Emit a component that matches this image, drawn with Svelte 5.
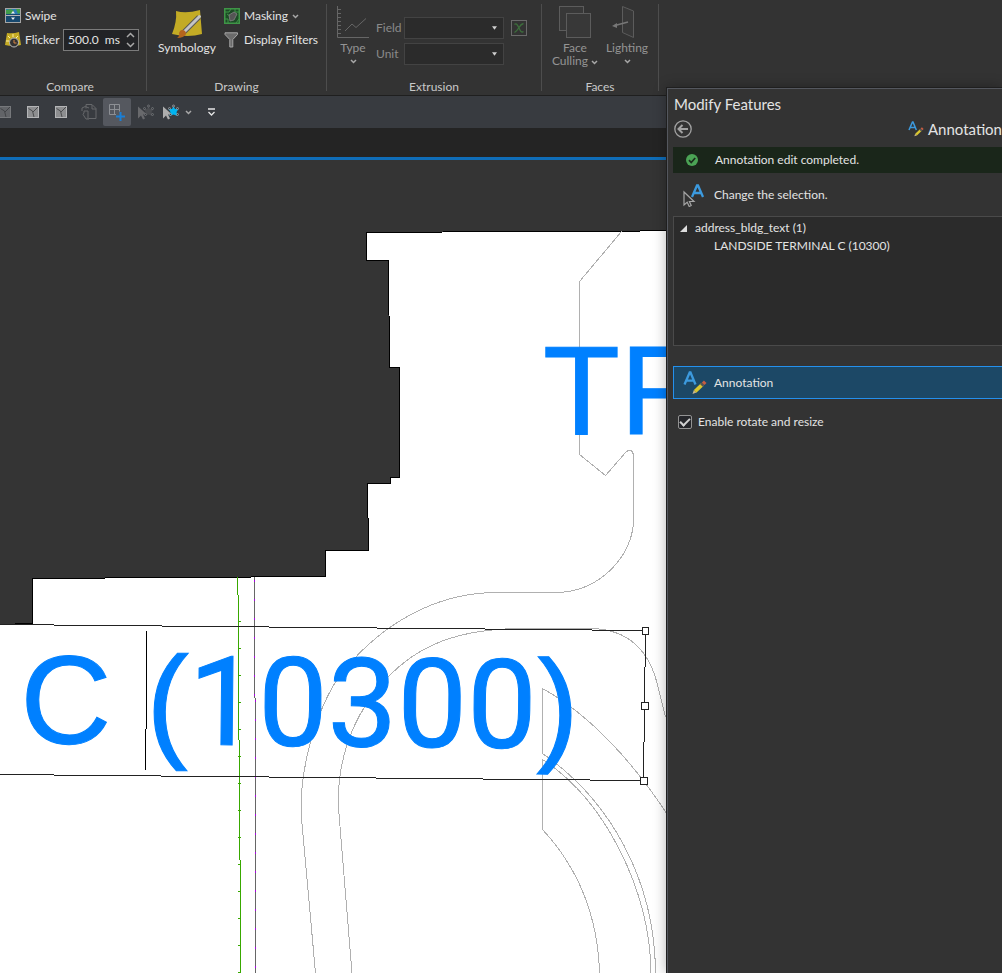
<script>
  let flicker = $state('500.0  ms');
  let field = $state('');
  let unit = $state('');
  let rotateResize = $state(true);
  let expanded = $state(true);

  function step(amount) {
    const value = Math.max(0, parseFloat(flicker) + amount);
    flicker = value.toFixed(1) + '  ms';
  }
</script>

{#snippet chevron()}
  <svg class="chevron" viewBox="0 0 7 5" width="7" height="5"><path d="M1 1l2.5 2.5L6 1" /></svg>
{/snippet}

{#snippet mapTile()}
  <svg viewBox="0 0 12 12" width="12" height="12">
    <rect x=".5" y=".5" width="11" height="11" fill="#8d8e90" stroke="#b4b5b7" />
    <path d="M1.500 2.500l4 2.500 1.500 6M6 6l5-5" fill="none" stroke="#4b4c4e" />
  </svg>
{/snippet}

{#snippet annotationIcon(size)}
  <svg viewBox="0 0 24 24" width={size} height={size}>
    <path d="M1.500 13.500L6.700 1.500h.8l5 12M3.600 9.600h7" fill="none" stroke="#3c9ade" stroke-width="2.300" />
    <path d="M9.500 23l1.300-4 2.600 2.600z" fill="#c9b58a" />
    <path d="M12.100 20.400l7.400-7" stroke="#d9c62f" stroke-width="3.600" />
    <path d="M18.400 14.400l1.800-1.800" stroke="#555" stroke-width="3.600" />
    <path d="M20.200 12.700l2-2" stroke="#c85c41" stroke-width="3.600" />
  </svg>
{/snippet}

{#snippet selectIcon(arrow, star, dots)}
  <svg viewBox="0 0 17 16" width="17" height="16">
    <path d="M1 2.500v12l3-3 2 4 2-1-2-4h4z" fill={arrow} />
    <path d="M11.500 2l1.500 3 3.500 0-2 3 1 4-4-1.500-4 1.500 1-4-2-3h3.500z" fill={star} />
    <g fill="#383b40" stroke={dots} stroke-width=".8">
      <circle cx="11.500" cy="2" r="1" />
      <circle cx="7.500" cy="4.500" r="1" />
      <circle cx="15.500" cy="4.500" r="1" />
      <circle cx="15.500" cy="10.500" r="1" />
      <circle cx="8.500" cy="10.500" r="1" />
    </g>
  </svg>
{/snippet}

<div class="app">
  <header class="ribbon">
    <section class="group compare">
      <div class="body rows">
        <button class="row">
          <svg viewBox="0 0 16 16" width="16" height="16">
            <rect x=".5" y=".5" width="15" height="14" fill="#17486e" stroke="#a5a5a5" />
            <path d="M1 1h14v5H1z" fill="#2b7cb3" />
            <path d="M1 2l5-1 3 2-3 3H1zM11 1h4v4l-2 1z" fill="#3f9c4b" />
            <path d="M1 7.500h14" stroke="#b5b5b5" />
            <path d="M6 5.500L8 3l2 2.500zM6 9.500L8 12l2-2.500z" fill="#eee" />
          </svg>
          <span>Swipe</span>
        </button>
        <div class="row">
          <svg viewBox="0 0 16 16" width="16" height="16">
            <path d="M2 1q6 1 12-1l2 13q-8 2-16 0z" fill="#c5ab24" />
            <path d="M8 2v3M3 4l2 2M13 4l-2 2M1 9h3" stroke="#fff0a0" />
            <circle cx="9" cy="10.500" r="4.500" fill="#333" stroke="#bbb" />
            <path d="M9 8v3h2.500" fill="none" stroke="#d98645" />
          </svg>
          <label for="flicker">Flicker</label>
          <div class="spinner">
            <input id="flicker" type="text" bind:value={flicker} />
            <div class="steps">
              <button aria-label="Increase" onclick={() => step(100)}>
                <svg viewBox="0 0 9 6" width="9" height="6"><path d="M1 5l3.500-3.500L8 5" /></svg>
              </button>
              <button aria-label="Decrease" onclick={() => step(-100)}>
                <svg viewBox="0 0 9 6" width="9" height="6"><path d="M1 1l3.500 3.500L8 1" /></svg>
              </button>
            </div>
          </div>
        </div>
      </div>
      <h2>Compare</h2>
    </section>

    <section class="group drawing">
      <div class="body">
        <button class="big">
          <svg viewBox="0 0 32 32" width="32" height="32">
            <path d="M5 3q10 3 24-1l2 24q-14 4-30 0q5-12 4-23z" fill="#c3ab25" />
            <path d="M28 9L12 25" stroke="#555" stroke-width="5" />
            <path d="M28.500 8.500L13 24" stroke="#c4c4c4" stroke-width="3" stroke-linecap="round" />
            <path d="M11 22q4 0 4 4q-2 4-9 4q3-2 2-5q1-3 3-3z" fill="#b5651d" />
          </svg>
          <span>Symbology</span>
        </button>
        <div class="rows">
          <button class="row">
            <svg viewBox="0 0 16 16" width="16" height="16">
              <rect x=".75" y=".75" width="14.500" height="14.500" fill="#1d4a26" stroke="#3f9547" stroke-width="1.500" />
              <path d="M1 4h4l2-3M11 1v3h4M1 11h3v4M12 15l3-4M3 6l3 2" fill="none" stroke="#3f9547" />
              <path d="M5 7l5-3 3 2-3 6-4 1z" fill="#555" stroke="#8b8b8b" stroke-width=".7" />
            </svg>
            <span>Masking</span>
            {@render chevron()}
          </button>
          <button class="row">
            <svg viewBox="0 0 16 16" width="16" height="16">
              <path d="M1 .8h12.500v1.700L8.800 7.500v7.500H5.800V7.500L1 2.500z" fill="#6b6b6b" stroke="#a6a6a6" />
            </svg>
            <span>Display Filters</span>
          </button>
        </div>
      </div>
      <h2>Drawing</h2>
    </section>

    <section class="group extrusion">
      <div class="body">
        <button class="big" disabled>
          <svg viewBox="0 0 32 32" width="32" height="32">
            <path d="M.5 0v31.500H32M1 3.500h3M1 7.500h3M1 11.500h3M1 15.500h3M1 19.500h3M1 23.500h3M1 27.500h3" fill="none" stroke="#666" />
            <path d="M8 25l7-7 4 3.500 10-9" fill="none" stroke="#666" />
          </svg>
          <span>Type</span>
          {@render chevron()}
        </button>
        <div class="fields">
          <label for="field">Field</label>
          <div class="combo">
            <select id="field" bind:value={field}><option value=""></option></select>
            <svg viewBox="0 0 6 4" width="5" height="4"><path d="M0 0h6L3 4z" /></svg>
          </div>
          <button class="expression" aria-label="Expression">
            <svg viewBox="0 0 16 16" width="16" height="16">
              <rect x=".5" y=".5" width="15" height="15" fill="none" stroke="#6a6a6a" />
              <path d="M3.500 4.500q2-2 4 2.500l1.500 3q1.500 3 3.500 1.500M12.500 3.500Q10 4 8 7.500T3.500 12.500" fill="none" stroke="#3d6e3c" stroke-width="1.300" />
            </svg>
          </button>
          <label for="unit">Unit</label>
          <div class="combo">
            <select id="unit" bind:value={unit}><option value=""></option></select>
            <svg viewBox="0 0 6 4" width="5" height="4"><path d="M0 0h6L3 4z" /></svg>
          </div>
        </div>
      </div>
      <h2>Extrusion</h2>
    </section>

    <section class="group faces">
      <div class="body">
        <button class="big" disabled>
          <svg viewBox="0 0 32 32" width="32" height="32" fill="#383838" stroke="#5c5c5c">
            <rect x=".5" y=".5" width="24" height="24" />
            <rect x="7.500" y="7.500" width="24" height="24" />
          </svg>
          <span>Face<br />Culling {@render chevron()}</span>
        </button>
        <button class="big" disabled>
          <svg viewBox="0 0 32 32" width="32" height="32">
            <path d="M11.500.5l11 4.500v26.500l-11-5z" fill="#383838" stroke="#5c5c5c" />
            <path d="M17 16L4 19.500" stroke="#777" stroke-width="1.500" />
            <path d="M1 20l5-3v5z" fill="#777" />
          </svg>
          <span>Lighting</span>
          {@render chevron()}
        </button>
      </div>
      <h2>Faces</h2>
    </section>
  </header>

  <nav class="quick">
    <button class="dim" aria-label="Full extent">{@render mapTile()}</button>
    <button aria-label="Previous extent">{@render mapTile()}</button>
    <button aria-label="Next extent">{@render mapTile()}</button>
    <button aria-label="Paste">
      <svg viewBox="0 0 16 16" width="16" height="16" fill="none" stroke="#66686b">
        <path d="M5 4.500V.5h6l4 4v10H8M11 1v4h4M1 4q3-3 7 0M1 4v3M3 9v-2h4v8M3 9q-2 1 0 3l2 3h3" />
      </svg>
    </button>
    <button class="active" aria-label="Add feature">
      <svg viewBox="0 0 18 18" width="18" height="18" fill="none">
        <path d="M1.500 1.500h10v10h-10zM6.500 1.500v10M1.500 6.500h10" stroke="#8c8f94" />
        <path d="M12.500 8.500v9M8 13h9" stroke="#55585f" stroke-width="4" />
        <path d="M12.500 9v9M8 13.500h9" stroke="#1a7fd6" stroke-width="2" />
      </svg>
    </button>
    <button aria-label="Select">{@render selectIcon('#68696c', '#4a4c50', '#77797c')}</button>
    <button class="select" aria-label="Select by shape">{@render selectIcon('#aeaeae', '#00b4f0', '#a2a5a8')}</button>
    <button class="narrow" aria-label="Selection options">{@render chevron()}</button>
    <button class="overflow" aria-label="Customize">
      <svg viewBox="0 0 9 8" width="9" height="8" fill="none" stroke="#e6e6e6" stroke-width="1.300">
        <path d="M1 1h7M1.500 4l3 3 3-3" />
      </svg>
    </button>
  </nav>

  <div class="tabs"></div>

  <main>
    <svg class="map" viewBox="0 160 1002 813" preserveAspectRatio="xMinYMin slice">
      <path
        class="ground"
        d="M1002 229.500L520 231.500L366.500 232.500V260.500H388.500L389.500 367.500H399.500V477.500H390.500V483.500H367.500L368.500 550.500H325.500V576.500L32.500 578.500V623.500L-2 624.500V980H1002z"
      />
      <g class="contours">
        <path d="M621.500 231.500L579.500 281.500V454.500L605.500 475.500L626 452Q632 447 633.500 455V522C632 556 600 592 556 592.500H498C445 592 393 616 352 661C325 688 306 742 301.500 792V818L315.500 973" />
        <path d="M352 973L338.500 808C337 770 347 725 379 687C410 650 450 629 520 628.500H592C640 630 653 665 658 687L665.500 717" />
        <path d="M542.500 753.500V688.500C592 716 635 765 667 814" />
        <path d="M542.500 753.500C610 800 655 880 655.500 973M651 973C650 890 605 800 542.500 759.500V829.500C580 870 598 920 599.500 973" />
      </g>
      <text x="543" y="434">TR</text>
      <text x="20" y="743" transform="rotate(0.550 20 743)">C (<tspan class="digits">10300</tspan>)</text>
      <path class="green" d="M237.500 577V595M238.500 595V740M239.500 740V860M240.500 860V973" />
      <path class="green ticks" d="M239 621V973" />
      <path class="violet" d="M254.500 577V698M255.500 698V973" />
      <path class="violet dots" d="M254.500 580V698M255.500 700V973" />
      <path class="frame" d="M-1 624.500L645.500 630.500L643.500 780.500L-1 774.500" />
      <path class="caret" d="M146.500 631V729M145.500 729V770" />
      <g class="handles">
        <rect x="642.500" y="627.500" width="6" height="7" />
        <rect x="641.500" y="702.500" width="7" height="7" />
        <rect x="640.500" y="777.500" width="7" height="7" />
      </g>
    </svg>
  </main>

  <aside class="pane">
    <h1>Modify Features</h1>
    <div class="toolbar">
      <button aria-label="Back">
        <svg viewBox="0 0 18 18" width="18" height="18" fill="none" stroke="#a2a2a2">
          <circle cx="9" cy="9" r="8.200" stroke-width="1.300" />
          <path d="M14 9H5M8.500 5L4.500 9l4 4" stroke-width="2" />
        </svg>
      </button>
      <span class="tool">{@render annotationIcon(16)}<span>Annotation</span></span>
    </div>
    <div class="message">
      <svg viewBox="0 0 12 12" width="12" height="12">
        <circle cx="6" cy="6" r="6" fill="#4ba355" />
        <path d="M3 6.200l2.200 2.300L9.200 4" fill="none" stroke="#1b2b1c" stroke-width="1.700" />
      </svg>
      <span>Annotation edit completed.</span>
    </div>
    <button class="change">
      <svg viewBox="0 0 24 24" width="24" height="24">
        <path d="M10 14L15 2.500h1l5 11.500M12 10h7" fill="none" stroke="#3c9ade" stroke-width="2.300" />
        <path d="M2 9v13l3.200-2.800 2 4.300 2-1-1.800-4H12z" fill="#333" stroke="#a5a5a5" stroke-width="1.200" />
      </svg>
      <span>Change the selection.</span>
    </button>
    <div class="tree">
      <button class="layer" onclick={() => (expanded = !expanded)}>
        <svg viewBox="0 0 7 7" width="7" height="7"><path d="M7 0v7H0z" fill="#ddd" /></svg>
        <span>address_bldg_text (1)</span>
      </button>
      {#if expanded}
        <button class="feature">LANDSIDE TERMINAL C (10300)</button>
      {/if}
    </div>
    <button class="selected">
      {@render annotationIcon(24)}
      <span>Annotation</span>
    </button>
    <div class="check">
      <input id="rotate" type="checkbox" bind:checked={rotateResize} />
      <label for="rotate">Enable rotate and resize</label>
    </div>
  </aside>
</div>

<style>
  :global(body) {
    margin: 0;
    background: #333;
  }

  .app {
    position: relative;
    display: flex;
    flex-direction: column;
    min-height: 100vh;
    overflow: hidden;
    font: 12px/18px Lato, "Open Sans", sans-serif;
    color: #e3e3e3;
    background: #333;
  }

  button,
  input,
  select {
    margin: 0;
    padding: 0;
    border: 0;
    border-radius: 0;
    font: inherit;
    color: inherit;
    background: none;
  }

  svg {
    display: block;
    flex: none;
  }

  .chevron path,
  .steps path {
    fill: none;
    stroke: #a8a8a8;
    stroke-width: 1.5;
  }

  /* ribbon */
  .ribbon {
    display: flex;
    height: 95px;
    border-bottom: 1px solid #1f1f1f;
    white-space: nowrap;
  }
  .group {
    box-sizing: border-box;
    display: flex;
    flex-direction: column;
    margin: 4px 0;
    border-right: 1px solid #4d4d4d;
  }
  .body {
    flex: 1;
    display: flex;
    align-items: flex-start;
  }
  .group h2 {
    margin: 0;
    font-size: 12px;
    font-weight: 400;
    line-height: 8px;
    text-align: center;
    color: #c8c8c8;
  }
  .compare {
    width: 153px;
    margin-left: -6px;
  }
  .compare .body {
    padding-left: 11px;
  }
  .drawing {
    width: 180px;
  }
  .drawing .body {
    gap: 5px;
    padding-left: 8px;
  }
  .extrusion {
    width: 215px;
  }
  .extrusion .body {
    gap: 5px;
    padding-left: 8px;
  }
  .faces {
    width: 117px;
  }
  .faces .body {
    padding-left: 7px;
  }
  .rows {
    flex-direction: column;
  }
  .row {
    display: flex;
    align-items: center;
    gap: 4px;
    height: 24px;
  }
  .row label {
    width: 34px;
  }
  .big {
    display: flex;
    flex-direction: column;
    align-items: center;
    width: 64px;
    padding-top: 2px;
    line-height: 13px;
  }
  .big > span {
    margin-top: 3px;
  }
  .big > .chevron {
    margin-top: 5px;
  }
  .big span .chevron {
    display: inline-block;
  }
  .big:disabled {
    color: #949494;
  }
  .drawing .big {
    padding-top: 4px;
  }
  .drawing .big > span {
    margin-top: 1px;
  }
  .extrusion .big {
    width: 36px;
  }
  .faces .big {
    width: 52px;
  }
  .spinner {
    display: flex;
    box-sizing: border-box;
    width: 76px;
    height: 22px;
    border: 1px solid #7b7b7b;
    background: #222326;
  }
  .spinner input {
    width: 54px;
    padding-left: 4px;
    white-space: pre;
  }
  .steps {
    display: grid;
    place-items: center;
    flex: 1;
  }
  .fields {
    display: grid;
    grid-template-columns: 24px 100px 19px;
    gap: 4px;
    align-items: center;
    padding-top: 13px;
    color: #8a8a8a;
  }
  .combo {
    display: grid;
    grid-template-columns: 1fr 12px;
    align-items: center;
  }
  .combo select {
    grid-area: 1 / 1 / 2 / 3;
    appearance: none;
    width: 100%;
    height: 22px;
    border: 1px solid #434343;
    background: #2b2b2b;
  }
  .combo svg {
    grid-area: 1 / 2;
    fill: #d0d0d0;
    pointer-events: none;
  }
  .expression {
    justify-self: end;
  }

  /* quick access toolbar */
  .quick {
    display: flex;
    align-items: center;
    height: 32px;
    background: #383b40;
  }
  .quick button {
    display: grid;
    place-items: center;
    flex: none;
    width: 28px;
    height: 28px;
  }
  .quick button:first-child {
    margin-left: -9px;
  }
  .quick .dim {
    opacity: 0.5;
  }
  .quick .active {
    border-radius: 2px;
    background: #55585f;
  }
  .quick .select {
    width: 22px;
  }
  .quick .narrow {
    width: 14px;
  }
  .quick .overflow {
    width: 32px;
  }
  .tabs {
    height: 29px;
    border-bottom: 3px solid #0f6db8;
    background: #242424;
  }

  /* map */
  main {
    flex: 1;
    display: flex;
    min-height: 0;
  }
  .map {
    flex: 1;
    width: 100%;
    background: #343434;
  }
  .map path {
    fill: none;
    shape-rendering: crispEdges;
  }
  .map .ground {
    fill: #fff;
    stroke: #000;
  }
  .contours {
    stroke: #b0b0b0;
  }
  .map text {
    font: 126px "Liberation Sans", Arial, sans-serif;
    fill: #0080ff;
    stroke: #0080ff;
    stroke-width: 1;
  }
  .map .digits {
    font: 124px Roboto, sans-serif;
  }
  .green {
    stroke: #38a800;
  }
  .map .ticks {
    stroke-width: 3;
    stroke-dasharray: 1 26;
  }
  .violet {
    stroke: #666;
  }
  .map .dots {
    stroke: #a900e6;
    stroke-dasharray: 2 17;
  }
  .frame {
    stroke: #222;
  }
  .caret {
    stroke: #000;
  }
  .handles {
    fill: #fff;
    stroke: #222;
  }

  /* floating pane over the map */
  .pane {
    position: absolute;
    top: 87px;
    right: 0;
    bottom: 0;
    box-sizing: border-box;
    width: 336px;
    padding: 5px 0 0 6px;
    overflow: hidden;
    border: 1px solid #1f1f1f;
    border-width: 1px 0 0 1px;
    background: #333;
    box-shadow: inset 1px 1px #54575e, 0 0 12px rgba(0, 0, 0, 0.3);
    white-space: nowrap;
  }
  .pane > button {
    display: flex;
    align-items: center;
    box-sizing: border-box;
    width: 100%;
  }
  h1 {
    margin: 0 0 0 1px;
    font-size: 15px;
    font-weight: 400;
    line-height: 22px;
  }
  .toolbar {
    display: flex;
    justify-content: space-between;
    align-items: center;
    height: 28px;
    margin-bottom: 4px;
    padding-left: 1px;
  }
  .tool {
    display: flex;
    align-items: center;
    gap: 4px;
    font-size: 15px;
  }
  .message {
    display: flex;
    align-items: center;
    gap: 17px;
    height: 26px;
    padding-left: 13px;
    background: #1a261a;
  }
  .change {
    gap: 8px;
    height: 43px;
    padding-left: 9px;
  }
  .tree {
    box-sizing: border-box;
    height: 130px;
    margin-bottom: 20px;
    padding-top: 2px;
    border: 1px solid #4a4a4a;
    border-right: 0;
    background: #2b2b2b;
  }
  .layer {
    display: flex;
    align-items: center;
    gap: 8px;
    padding-left: 6px;
  }
  .feature {
    display: block;
    padding-left: 40px;
  }
  .pane > .selected {
    gap: 7px;
    height: 33px;
    padding-left: 9px;
    border: 1px solid #2490ed;
    border-right: 0;
    background: #1c4866;
  }
  .check {
    display: flex;
    align-items: center;
    gap: 6px;
    height: 46px;
    padding-left: 5px;
  }
  .check input {
    appearance: none;
    display: grid;
    place-items: center;
    width: 14px;
    height: 14px;
    border: 1px solid #939393;
    border-radius: 2px;
    background: #25262a;
  }
  .check input:checked::before {
    content: "";
    width: 8px;
    height: 4px;
    border: solid #d0d0d0;
    border-width: 0 0 2px 2px;
    transform: translateY(-1px) rotate(-45deg);
  }
</style>
